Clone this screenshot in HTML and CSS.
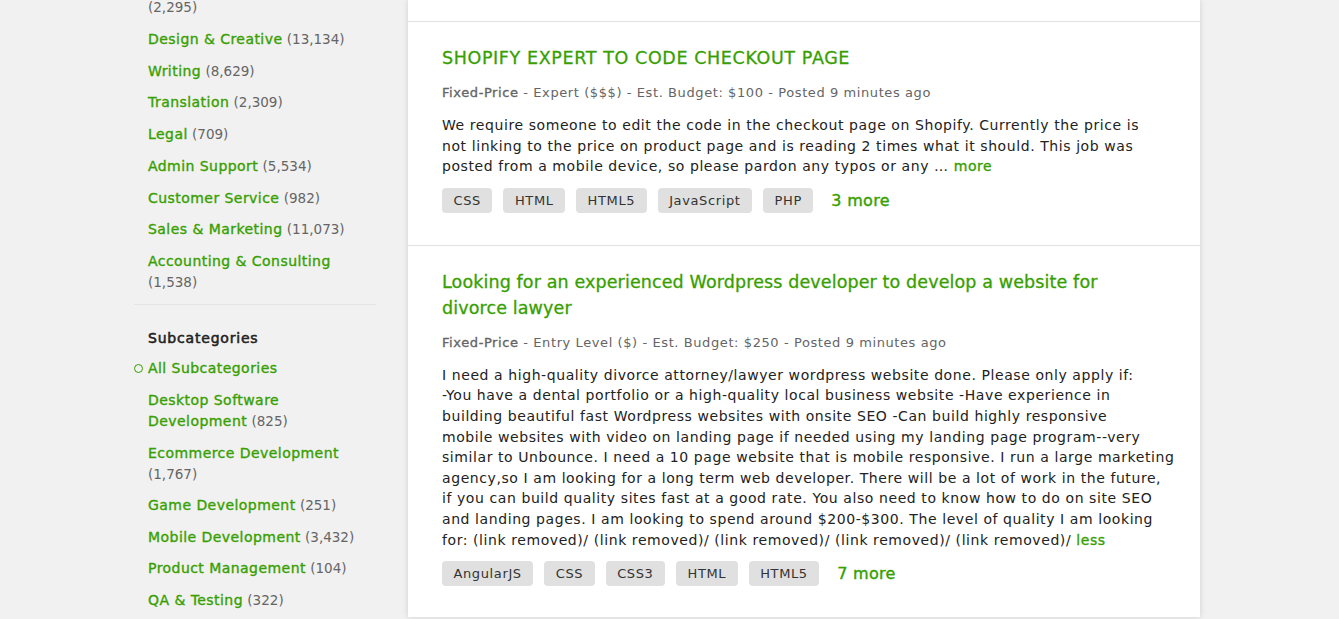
FILE: index.html
```html
<!DOCTYPE html>
<html>
<head>
<meta charset="utf-8">
<link rel="stylesheet" href="styles.css">
</head>
<body>
<div class="page">
  <aside class="sidebar">
    <ul class="cat-list">
      <li><a class="cat">Web, Mobile &amp; Software Dev</a> <span class="count">(2,295)</span></li>
      <li><a class="cat">Design &amp; Creative</a> <span class="count">(13,134)</span></li>
      <li><a class="cat">Writing</a> <span class="count">(8,629)</span></li>
      <li><a class="cat">Translation</a> <span class="count">(2,309)</span></li>
      <li><a class="cat">Legal</a> <span class="count">(709)</span></li>
      <li><a class="cat">Admin Support</a> <span class="count">(5,534)</span></li>
      <li><a class="cat">Customer Service</a> <span class="count">(982)</span></li>
      <li><a class="cat">Sales &amp; Marketing</a> <span class="count">(11,073)</span></li>
      <li><a class="cat">Accounting &amp; Consulting</a> <span class="count">(1,538)</span></li>
    </ul>
    <hr class="sep">
    <h4 class="side-heading">Subcategories</h4>
    <ul class="cat-list sub-list">
      <li class="active"><span class="dot"></span><a class="cat">All Subcategories</a></li>
      <li><a class="cat">Desktop Software Development</a> <span class="count">(825)</span></li>
      <li><a class="cat">Ecommerce Development</a> <span class="count">(1,767)</span></li>
      <li><a class="cat">Game Development</a> <span class="count">(251)</span></li>
      <li><a class="cat">Mobile Development</a> <span class="count">(3,432)</span></li>
      <li><a class="cat">Product Management</a> <span class="count">(104)</span></li>
      <li><a class="cat">QA &amp; Testing</a> <span class="count">(322)</span></li>
    </ul>
  </aside>

  <main class="card">
    <div class="job-tail"></div>
    <section class="job">
      <h2 class="job-title upper">SHOPIFY EXPERT TO CODE CHECKOUT PAGE</h2>
      <p class="meta"><strong>Fixed-Price</strong> - Expert ($$$) - Est. Budget: $100 - Posted 9 minutes ago</p>
      <p class="desc">We require someone to edit the code in the checkout page on Shopify. Currently the price is<br>not linking to the price on product page and is reading 2 times what it should. This job was<br>posted from a mobile device, so please pardon any typos or any &hellip; <a class="inline-link">more</a></p>
      <div class="tags">
        <span class="tag">CSS</span>
        <span class="tag">HTML</span>
        <span class="tag">HTML5</span>
        <span class="tag">JavaScript</span>
        <span class="tag">PHP</span>
        <a class="more-tags">3 more</a>
      </div>
    </section>
    <section class="job">
      <h2 class="job-title">Looking for an experienced Wordpress developer to develop a website for divorce lawyer</h2>
      <p class="meta"><strong>Fixed-Price</strong> - Entry Level ($) - Est. Budget: $250 - Posted 9 minutes ago</p>
      <p class="desc">I need a high-quality divorce attorney/lawyer wordpress website done. Please only apply if:<br>-You have a dental portfolio or a high-quality local business website -Have experience in<br>building beautiful fast Wordpress websites with onsite SEO -Can build highly responsive<br>mobile websites with video on landing page if needed using my landing page program--very<br>similar to Unbounce. I need a 10 page website that is mobile responsive. I run a large marketing<br>agency,so I am looking for a long term web developer. There will be a lot of work in the future,<br>if you can build quality sites fast at a good rate. You also need to know how to do on site SEO<br>and landing pages. I am looking to spend around $200-$300. The level of quality I am looking<br>for: (link removed)/ (link removed)/ (link removed)/ (link removed)/ (link removed)/ <a class="inline-link">less</a></p>
      <div class="tags">
        <span class="tag">AngularJS</span>
        <span class="tag">CSS</span>
        <span class="tag">CSS3</span>
        <span class="tag">HTML</span>
        <span class="tag">HTML5</span>
        <a class="more-tags">7 more</a>
      </div>
    </section>
  </main>
</div>
</body>
</html>
```

FILE: styles.css
```css
html, body {
  margin: 0;
  padding: 0;
  background: #f1f1f1;
  height: 619px;
  overflow: hidden;
}
body {
  font-family: "DejaVu Sans", "Liberation Sans", sans-serif;
  color: #222;
}
.page {
  display: flex;
  align-items: flex-start;
}
.sidebar {
  width: 230px;
  padding-left: 148px;
  margin-top: -24px;
  flex: none;
}
.cat-list {
  list-style: none;
  margin: 0;
  padding: 0;
}
.cat-list li {
  font-size: 13.5px;
  line-height: 21px;
  margin-bottom: 10.75px;
  position: relative;
}
.sub-list li {
  margin-bottom: 10.65px;
}
.cat {
  color: #37a000;
  font-size: 14px;
  letter-spacing: 0.45px;
  -webkit-text-stroke: 0.35px #37a000;
}
.count {
  color: #656565;
}
.sep {
  border: 0;
  border-top: 1px solid #e4e4e4;
  margin: 0 0 23px -14px;
  width: 242px;
}
.side-heading {
  margin: 0 0 9.5px;
  font-size: 14px;
  line-height: 21px;
  font-weight: normal;
  letter-spacing: 0.8px;
  -webkit-text-stroke: 0.55px #222;
  color: #222;
}
.dot {
  position: absolute;
  left: -14px;
  top: 6px;
  width: 7px;
  height: 7px;
  border: 1.3px solid #37a000;
  border-radius: 50%;
}
.card {
  margin-left: 30px;
  width: 792px;
  background: #fff;
  box-shadow: 0 0 6px rgba(0,0,0,0.14);
  flex: none;
  height: 617px;
}
.job-tail {
  height: 21px;
  border-bottom: 1px solid #e2e2e2;
}
.job {
  padding: 23px 12px 32px 34px;
  border-bottom: 1px solid #e2e2e2;
}
.job:last-child {
  border-bottom: 0;
}
.job-title {
  margin: 0;
  font-size: 17.5px;
  line-height: 26px;
  font-weight: normal;
  letter-spacing: 0.12px;
  color: #37a000;
  -webkit-text-stroke: 0.3px #37a000;
  max-width: 700px;
}
.job-title.upper {
  letter-spacing: 0.62px;
}
.meta {
  margin: 12px 0 0;
  font-size: 13px;
  line-height: 20px;
  letter-spacing: 0.59px;
  color: #656565;
}
.meta strong {
  font-weight: normal;
  -webkit-text-stroke: 0.35px #656565;
}
.desc {
  margin: 12px 0 0;
  font-size: 14px;
  line-height: 20.6px;
  letter-spacing: 0.58px;
  color: #222;
}
.inline-link {
  color: #37a000;
  -webkit-text-stroke: 0.35px #37a000;
}
.tags {
  margin-top: 11px;
  display: flex;
  align-items: center;
  gap: 11px;
}
.tag {
  background: #e0e0e0;
  border-radius: 4px;
  height: 25px;
  line-height: 25px;
  padding: 0 11.5px;
  font-size: 13px;
  letter-spacing: 0.62px;
  color: #333;
}
.more-tags {
  margin-left: 7px;
  font-size: 16px;
  letter-spacing: 0.3px;
  color: #37a000;
  -webkit-text-stroke: 0.4px #37a000;
}
```
